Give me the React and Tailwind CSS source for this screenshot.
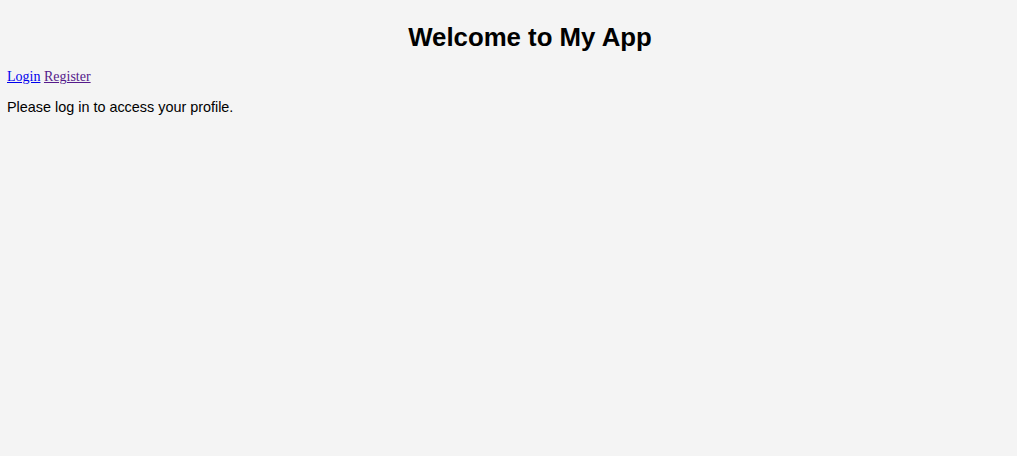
export default function App() {
  return (
    <div className="min-h-screen bg-[#f4f4f4] text-black" style={{ fontFamily: '"Liberation Sans", Arial, sans-serif' }}>
      <div className="pl-[43px] pt-[22px] text-center">
        <h1 className="text-[25.8px] leading-[30px] font-bold">Welcome to My App</h1>
      </div>
      <div className="pl-[7px] pr-2 pt-[16px]">
        <nav className="text-[14px] leading-[18px]" style={{ fontFamily: '"Liberation Serif", "Times New Roman", serif' }}>
          <a href="#" className="underline text-[#0000ee]">Login</a>{' '}
          <a href="#" className="underline text-[#551a8b]">Register</a>
        </nav>
        <p className="mt-[12px] text-[14.4px] leading-[18px]">Please log in to access your profile.</p>
      </div>
    </div>
  );
}
